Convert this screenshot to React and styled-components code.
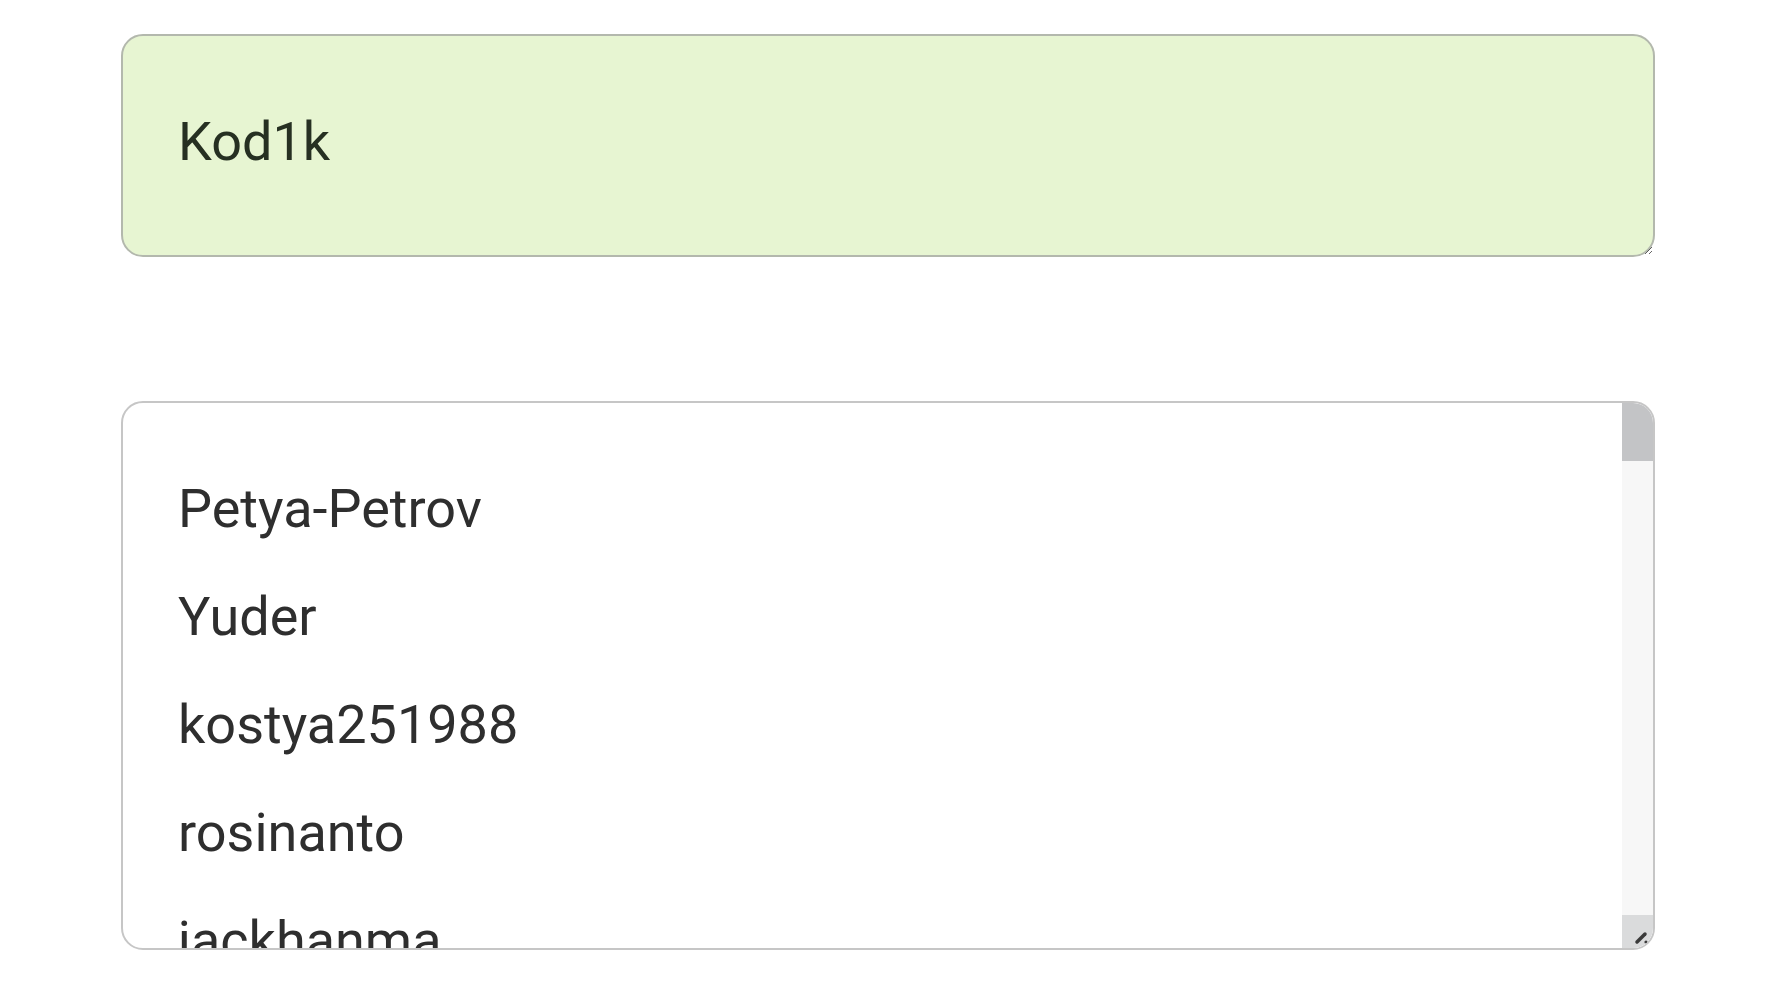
import React from 'react';
import styled, { createGlobalStyle } from 'styled-components';

const GlobalStyle = createGlobalStyle`
  html, body {
    margin: 0;
    background: #fff;
    font-family: Roboto, "Noto Sans", sans-serif;
  }
`;

const Page = styled.div`
  display: flex;
  flex-direction: column;
  gap: 144px;
  padding: 34px 121px 0;
`;

const NameBox = styled.div`
  box-sizing: border-box;
  height: 223px;
  padding: 52px 55px;
  border: 2px solid #b3b8ad;
  border-radius: 22px;
  background: #e7f5d2;
  color: #263022;
  font-size: 54px;
  line-height: 108px;
  overflow: hidden;
  resize: both;
`;

const ListBox = styled.div`
  box-sizing: border-box;
  display: flex;
  height: 549px;
  border: 2px solid #c6c6c6;
  border-radius: 22px;
  background: #fff;
  overflow: hidden;
`;

const ListBody = styled.div`
  flex: 1;
  padding: 52px 55px;
  color: #2e2e2e;
  font-size: 54px;
  line-height: 108px;
  overflow: hidden;
`;

const Item = styled.div`
  white-space: nowrap;
`;

const ScrollBar = styled.div`
  display: flex;
  flex-direction: column;
  width: 31px;
  background: #f7f7f7;
`;

const Thumb = styled.div`
  height: 58px;
  background: #c3c4c6;
`;

const Track = styled.div`
  flex: 1;
`;

const Corner = styled.div`
  display: flex;
  align-items: flex-end;
  justify-content: flex-end;
  height: 33px;
  padding: 0 2px 2px 0;
  box-sizing: border-box;
  background: #dadbdc;
`;

const users = ['Petya-Petrov', 'Yuder', 'kostya251988', 'rosinanto', 'jackhanma'];

const Resizer = () => (
  <svg width="18" height="18" viewBox="0 0 18 18">
    <path d="M4 14 L12 6" stroke="#3a3a3a" strokeWidth="3.5" strokeLinecap="round" />
    <circle cx="13" cy="14" r="1.6" fill="#3a3a3a" />
  </svg>
);

export default function App() {
  return (
    <>
      <GlobalStyle />
      <Page>
        <NameBox>Kod1k</NameBox>
        <ListBox>
          <ListBody>
            {users.map((u) => (
              <Item key={u}>{u}</Item>
            ))}
          </ListBody>
          <ScrollBar>
            <Thumb />
            <Track />
            <Corner>
              <Resizer />
            </Corner>
          </ScrollBar>
        </ListBox>
      </Page>
    </>
  );
}
